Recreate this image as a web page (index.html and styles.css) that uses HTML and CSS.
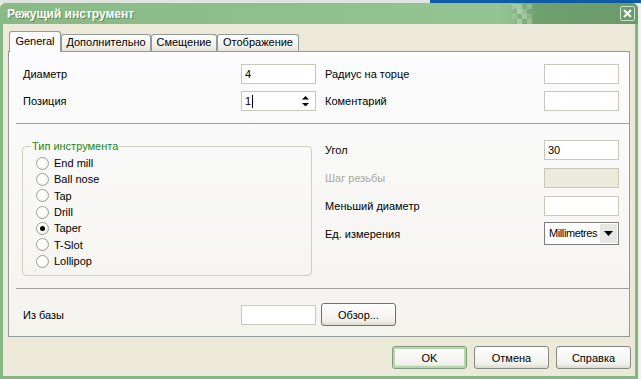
FILE: index.html
```html
<!DOCTYPE html>
<html lang="ru">
<head>
    <meta charset="UTF-8">
    <title>Режущий инструмент</title>
    <link rel="stylesheet" href="styles.css">
</head>
<body>
    <div class="window">
        <div class="titlebar">
            <span class="title">Режущий инструмент</span>
            <svg class="title-deco" width="24" height="20" viewBox="0 0 24 20">
                <rect x="0" y="0" width="5" height="5" fill="#ffffff" opacity="0.18"/>
                <rect x="5" y="0" width="5" height="5" fill="#ffffff" opacity="0.28"/>
                <rect x="15" y="0" width="5" height="5" fill="#ffffff" opacity="0.22"/>
                <rect x="5" y="5" width="5" height="5" fill="#ffffff" opacity="0.35"/>
                <rect x="10" y="5" width="5" height="5" fill="#ffffff" opacity="0.2"/>
                <rect x="0" y="10" width="5" height="5" fill="#ffffff" opacity="0.15"/>
                <rect x="10" y="10" width="5" height="5" fill="#ffffff" opacity="0.3"/>
                <rect x="15" y="10" width="5" height="5" fill="#ffffff" opacity="0.15"/>
                <rect x="5" y="15" width="5" height="5" fill="#ffffff" opacity="0.3"/>
                <rect x="15" y="15" width="5" height="5" fill="#ffffff" opacity="0.25"/>
            </svg>
            <span class="close-btn">
                <svg width="13" height="13" viewBox="0 0 13 13">
                    <path d="M3 3 L10 10 M10 3 L3 10" stroke="#ffffff" stroke-width="2"/>
                </svg>
            </span>
        </div>

        <div class="client">
            <div class="tabs">
                <div class="tab active tab-general">General</div>
                <div class="tab tab-extra">Дополнительно</div>
                <div class="tab tab-offset">Смещение</div>
                <div class="tab tab-view">Отображение</div>
            </div>

            <div class="panel">
                <!-- main sizes -->
                <div class="section section-top">
                    <div class="form-grid">
                        <label>Диаметр</label>
                        <input class="field" type="text" value="4">
                        <label class="right-label">Радиус на торце</label>
                        <input class="field" type="text" value="">

                        <label>Позиция</label>
                        <div class="field spin">
                            <span>1</span><span class="caret"></span>
                            <svg class="spin-arrows" width="9" height="13" viewBox="0 0 9 13">
                                <path d="M4.5 1 L8 4.5 L1 4.5 Z" fill="#000"/>
                                <path d="M1 8 L8 8 L4.5 11.5 Z" fill="#000"/>
                            </svg>
                        </div>
                        <label class="right-label">Коментарий</label>
                        <input class="field" type="text" value="">
                    </div>
                </div>

                <hr class="sep">

                <!-- tool type and angle -->
                <div class="section section-middle">
                    <fieldset class="group">
                        <legend>Тип инструмента</legend>
                        <div class="radio-list">
                            <div class="radio-row"><span class="radio"></span>End mill</div>
                            <div class="radio-row"><span class="radio"></span>Ball nose</div>
                            <div class="radio-row"><span class="radio"></span>Tap</div>
                            <div class="radio-row"><span class="radio"></span>Drill</div>
                            <div class="radio-row"><span class="radio checked"></span>Taper</div>
                            <div class="radio-row"><span class="radio"></span>T-Slot</div>
                            <div class="radio-row"><span class="radio"></span>Lollipop</div>
                        </div>
                    </fieldset>

                    <div class="right-col">
                        <label>Угол</label>
                        <input class="field" type="text" value="30">

                        <label class="disabled">Шаг резьбы</label>
                        <input class="field" type="text" value="" disabled>

                        <label>Меньший диаметр</label>
                        <input class="field" type="text" value="">

                        <label class="unit-label">Ед. измерения</label>
                        <div class="select">
                            <span class="select-text">Millimetres</span>
                            <span class="select-btn">
                                <svg width="9" height="5" viewBox="0 0 9 5"><path d="M0 0 L9 0 L4.5 5 Z" fill="#000"/></svg>
                            </span>
                        </div>
                    </div>
                </div>

                <hr class="sep">

                <!-- database -->
                <div class="section section-bottom">
                    <label>Из базы</label>
                    <input class="field" type="text" value="">
                    <button class="btn browse-btn">Обзор...</button>
                </div>
            </div>

            <div class="dialog-buttons">
                <button class="btn default-btn">OK</button>
                <button class="btn">Отмена</button>
                <button class="btn">Справка</button>
            </div>
        </div>
    </div>
</body>
</html>
```

FILE: styles.css
```css
* {
    box-sizing: border-box;
}

html {
    background: #eef0ee linear-gradient(90deg, #dfe4e0 0, #dfe4e0 430px, #0c5da5 430px) top left / 100% 3px no-repeat;
}

body {
    margin: 0;
    font-family: "Liberation Sans", Arial, sans-serif;
    font-size: 11px;
    color: #000;
}

.window {
    width: 638px;
    height: 376px;
    margin-top: 3px;
    display: flex;
    flex-direction: column;
    background: #84b583;
    padding-bottom: 3px;
    border-radius: 6px 6px 0 0;
}

/* title bar */
.titlebar {
    height: 21px;
    display: flex;
    align-items: center;
    padding-left: 7px;
    background: linear-gradient(90deg, #89b986 0%, #94c491 78%, #8fbf8c 80%, #70a06e 84%, #6c996a 100%);
    border-radius: 6px 6px 0 0;
}

.title {
    color: #fff;
    font-weight: bold;
    font-size: 12px;
    text-shadow: 1px 1px 0 #5e8a5c;
}

.title-deco {
    margin-left: auto;
}

.close-btn {
    width: 15px;
    height: 15px;
    margin-left: 84px;
    margin-right: 3px;
    border: 1px solid #cfe2cd;
    border-radius: 2px;
    display: flex;
    align-items: center;
    justify-content: center;
}

/* client area */
.client {
    flex: 1;
    margin: 0 3px;
    background: #ece9d8;
    padding: 7px 5px 0;
}

.tabs {
    display: flex;
    align-items: flex-end;
    height: 20px;
    padding-left: 1px;
}

.tab {
    height: 17px;
    line-height: 15px;
    text-align: center;
    border: 1px solid #919b9c;
    border-bottom: none;
    border-radius: 3px 3px 0 0;
    background: linear-gradient(#fefefe, #f3f2ec 60%, #e6e4da);
}

.tab.active {
    height: 21px;
    line-height: 19px;
    margin-bottom: -1px;
    background: #fcfcfe;
    position: relative;
    z-index: 1;
}

.tab-general { width: 52px; }
.tab-extra { width: 90px; }
.tab-offset { width: 66px; }
.tab-view { width: 82px; }

.panel {
    height: 286px;
    border: 1px solid #919b9c;
    background: linear-gradient(#fcfcfe, #f4f3ee);
    display: flex;
    flex-direction: column;
}

.section-top {
    height: 71px;
    flex-shrink: 0;
    padding: 12px 0 0 14px;
}

.form-grid {
    display: grid;
    grid-template-columns: 218px 84px 219px 75px;
    grid-auto-rows: 20px;
    row-gap: 7px;
    align-items: center;
}

.field {
    width: 75px;
    height: 20px;
    border: 1px solid #c9c7ba;
    background: #fff;
    font-family: inherit;
    font-size: 11px;
    color: #000;
    padding: 0 3px;
    margin: 0;
    outline: none;
}

.field:disabled {
    background: #ebeadb;
}

.spin {
    display: flex;
    align-items: center;
}

.caret {
    width: 1px;
    height: 13px;
    background: #000;
    margin-left: 1px;
}

.spin-arrows {
    margin-left: auto;
    margin-right: 2px;
}

.sep {
    flex-shrink: 0;
    border: 0;
    border-top: 1px solid #a0a0a0;
    height: 0;
    margin: 0 0 0 7px;
}

.section-middle {
    height: 164px;
    flex-shrink: 0;
    display: flex;
    align-items: flex-start;
    padding: 16px 0 0 13px;
}

.group {
    width: 290px;
    min-width: 0;
    margin: 0;
    padding: 2px 0 6px 8px;
    border: 1px solid #d0d0bf;
    border-radius: 4px;
}

.group legend {
    color: #17891a;
    padding: 0 1px;
    line-height: 13px;
}

.radio-list {
    padding-left: 5px;
}

.radio-row {
    height: 16.33px;
    display: flex;
    align-items: center;
    gap: 5px;
}

.radio {
    width: 13px;
    height: 13px;
    border-radius: 50%;
    border: 1px solid #a09f95;
    background: radial-gradient(circle at 40% 40%, #ffffff 40%, #e3e2da);
    display: flex;
    align-items: center;
    justify-content: center;
}

.radio.checked::after {
    content: "";
    width: 5px;
    height: 5px;
    border-radius: 50%;
    background: #000;
}

.right-col {
    margin-left: 13px;
    display: grid;
    grid-template-columns: 219px 75px;
    grid-template-rows: 20px 20px 20px 23px;
    row-gap: 8px;
    align-items: center;
}

.right-col .disabled {
    color: #aca899;
}

.unit-label,
.select {
    margin-top: -4px;
}

.select {
    width: 75px;
    height: 23px;
    border: 1px solid #7d7d7d;
    background: #fff;
    display: flex;
    align-items: stretch;
    padding: 1px;
}

.select-text {
    flex: 1;
    padding-left: 3px;
    line-height: 19px;
    letter-spacing: -0.4px;
    white-space: nowrap;
    overflow: hidden;
}

.select-btn {
    width: 17px;
    flex-shrink: 0;
    background: #e6e6e3;
    display: flex;
    align-items: center;
    justify-content: center;
}

.section-bottom {
    display: grid;
    grid-template-columns: 218px 80px 75px;
    align-items: center;
    padding: 14px 0 0 14px;
}

.btn {
    width: 75px;
    height: 23px;
    font-family: inherit;
    font-size: 11px;
    color: #000;
    border: 1px solid #808a80;
    border-radius: 3px;
    background: linear-gradient(#fefefe, #f2f1ec 80%, #dcd8cc);
    padding: 0;
}

.browse-btn {
    border-color: #707070;
}

.dialog-buttons {
    display: flex;
    justify-content: flex-end;
    gap: 7px;
    margin: 9px -1px 0 0;
}

.default-btn {
    border-color: #7e9c7c;
    box-shadow: inset 0 0 0 2px #b7d6b0;
}
```
